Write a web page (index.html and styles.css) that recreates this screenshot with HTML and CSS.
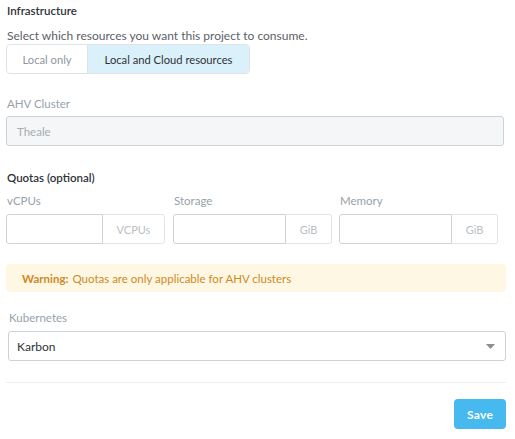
FILE: index.html
```html
<!DOCTYPE html>
<html>
<head>
<meta charset="utf-8">
<link rel="stylesheet" href="styles.css">
</head>
<body>
<div class="page">
  <div class="section-title">Infrastructure</div>
  <div class="hint">Select which resources you want this project to consume.</div>
  <div class="toggle">
    <div class="toggle-btn">Local only</div>
    <div class="toggle-btn active">Local and Cloud resources</div>
  </div>

  <div class="field-label cluster-label">AHV Cluster</div>
  <div class="input disabled">Theale</div>

  <div class="section-title quotas-title">Quotas (optional)</div>
  <div class="quota-grid">
    <div class="quota">
      <div class="field-label">vCPUs</div>
      <div class="group">
        <div class="group-input"></div>
        <div class="addon wide">VCPUs</div>
      </div>
    </div>
    <div class="quota">
      <div class="field-label">Storage</div>
      <div class="group">
        <div class="group-input"></div>
        <div class="addon">GiB</div>
      </div>
    </div>
    <div class="quota">
      <div class="field-label">Memory</div>
      <div class="group">
        <div class="group-input"></div>
        <div class="addon">GiB</div>
      </div>
    </div>
  </div>

  <div class="warning"><b>Warning:</b> Quotas are only applicable for AHV clusters</div>

  <div class="field-label kube-label">Kubernetes</div>
  <div class="select">
    <span>Karbon</span>
    <svg class="caret" width="9" height="5" viewBox="0 0 9 5"><path d="M0 0H9L4.5 5Z" fill="#8a8f96"/></svg>
  </div>

  <div class="divider"></div>
  <div class="footer">
    <button class="save">Save</button>
  </div>
</div>
</body>
</html>
```
FILE: styles.css
```css
* { box-sizing: border-box; }
html, body { margin: 0; padding: 0; background: #fff; }
body {
  font-family: Lato, "Open Sans", sans-serif;
  font-size: 12px;
  color: #3b3f44;
}
.page {
  width: 515px;
  padding: 3px 9px 0 6px;
}
.section-title {
  font-size: 11.5px;
  font-weight: 600;
  color: #2f3338;
  line-height: 16px;
  padding-left: 1px;
}
.hint {
  margin-top: 9px;
  line-height: 16px;
  color: #5b6168;
  padding-left: 1px;
}
.toggle {
  margin-top: 0;
  display: inline-flex;
  height: 30px;
  border: 1px solid #dfe3e7;
  border-radius: 4px;
  overflow: hidden;
}
.toggle-btn {
  display: flex;
  align-items: center;
  justify-content: center;
  width: 80px;
  color: #8e979f;
  font-size: 11.2px;
}
.toggle-btn.active {
  width: 162px;
  background: #daf0fa;
  color: #2f3338;
  border-left: 1px solid #dfe3e7;
}
.field-label {
  color: #97a1aa;
  font-size: 11.5px;
  line-height: 16px;
  padding-left: 1px;
}
.cluster-label { margin-top: 22px; }
.input {
  margin-top: 4px;
  margin-right: 2px;
  height: 30px;
  border: 1px solid #cdd2d6;
  border-radius: 3px;
  display: flex;
  align-items: center;
  padding-left: 10px;
  font-size: 11.5px;
}
.input.disabled {
  background: #f5f6f7;
  color: #a6adb3;
}
.quotas-title { margin-top: 24px; }
.quota-grid {
  margin-top: 7px;
  display: grid;
  grid-template-columns: 167px 166px 167px;
}
.group {
  margin-top: 5px;
  display: flex;
  height: 30px;
  width: 159px;
}
.group-input {
  flex: 1;
  border: 1px solid #cdd2d6;
  border-radius: 3px 0 0 3px;
}
.addon {
  width: 46px;
  border: 1px solid #e3e6e9;
  border-left: none;
  border-radius: 0 3px 3px 0;
  display: flex;
  align-items: center;
  justify-content: center;
  color: #b9c0c6;
  font-size: 11px;
}
.addon.wide { width: 62px; }
.warning {
  margin-top: 20px;
  height: 28px;
  background: #fdf7e4;
  border-radius: 4px;
  color: #d08a24;
  font-size: 11.5px;
  display: flex;
  align-items: center;
  padding-left: 16px;
}
.warning b { font-weight: 700; margin-right: 4px; }
.kube-label { margin-top: 18px; padding-left: 3px; }
.select {
  margin-top: 5px;
  margin-left: 2px;
  height: 30px;
  border: 1px solid #cdd2d6;
  border-radius: 3px;
  display: flex;
  align-items: center;
  justify-content: space-between;
  padding: 0 10px 0 8px;
  color: #2f3338;
  font-size: 12px;
}
.caret { display: block; }
.divider {
  margin-top: 21px;
  height: 1px;
  background: #eceef0;
}
.footer {
  display: flex;
  justify-content: flex-end;
  margin-top: 16px;
}
.save {
  width: 52px;
  height: 30px;
  border: none;
  border-radius: 4px;
  background: #46b9ee;
  color: #fff;
  font-family: Lato, "Open Sans", sans-serif;
  font-weight: 700;
  font-size: 12px;
  letter-spacing: 0.3px;
}
```
